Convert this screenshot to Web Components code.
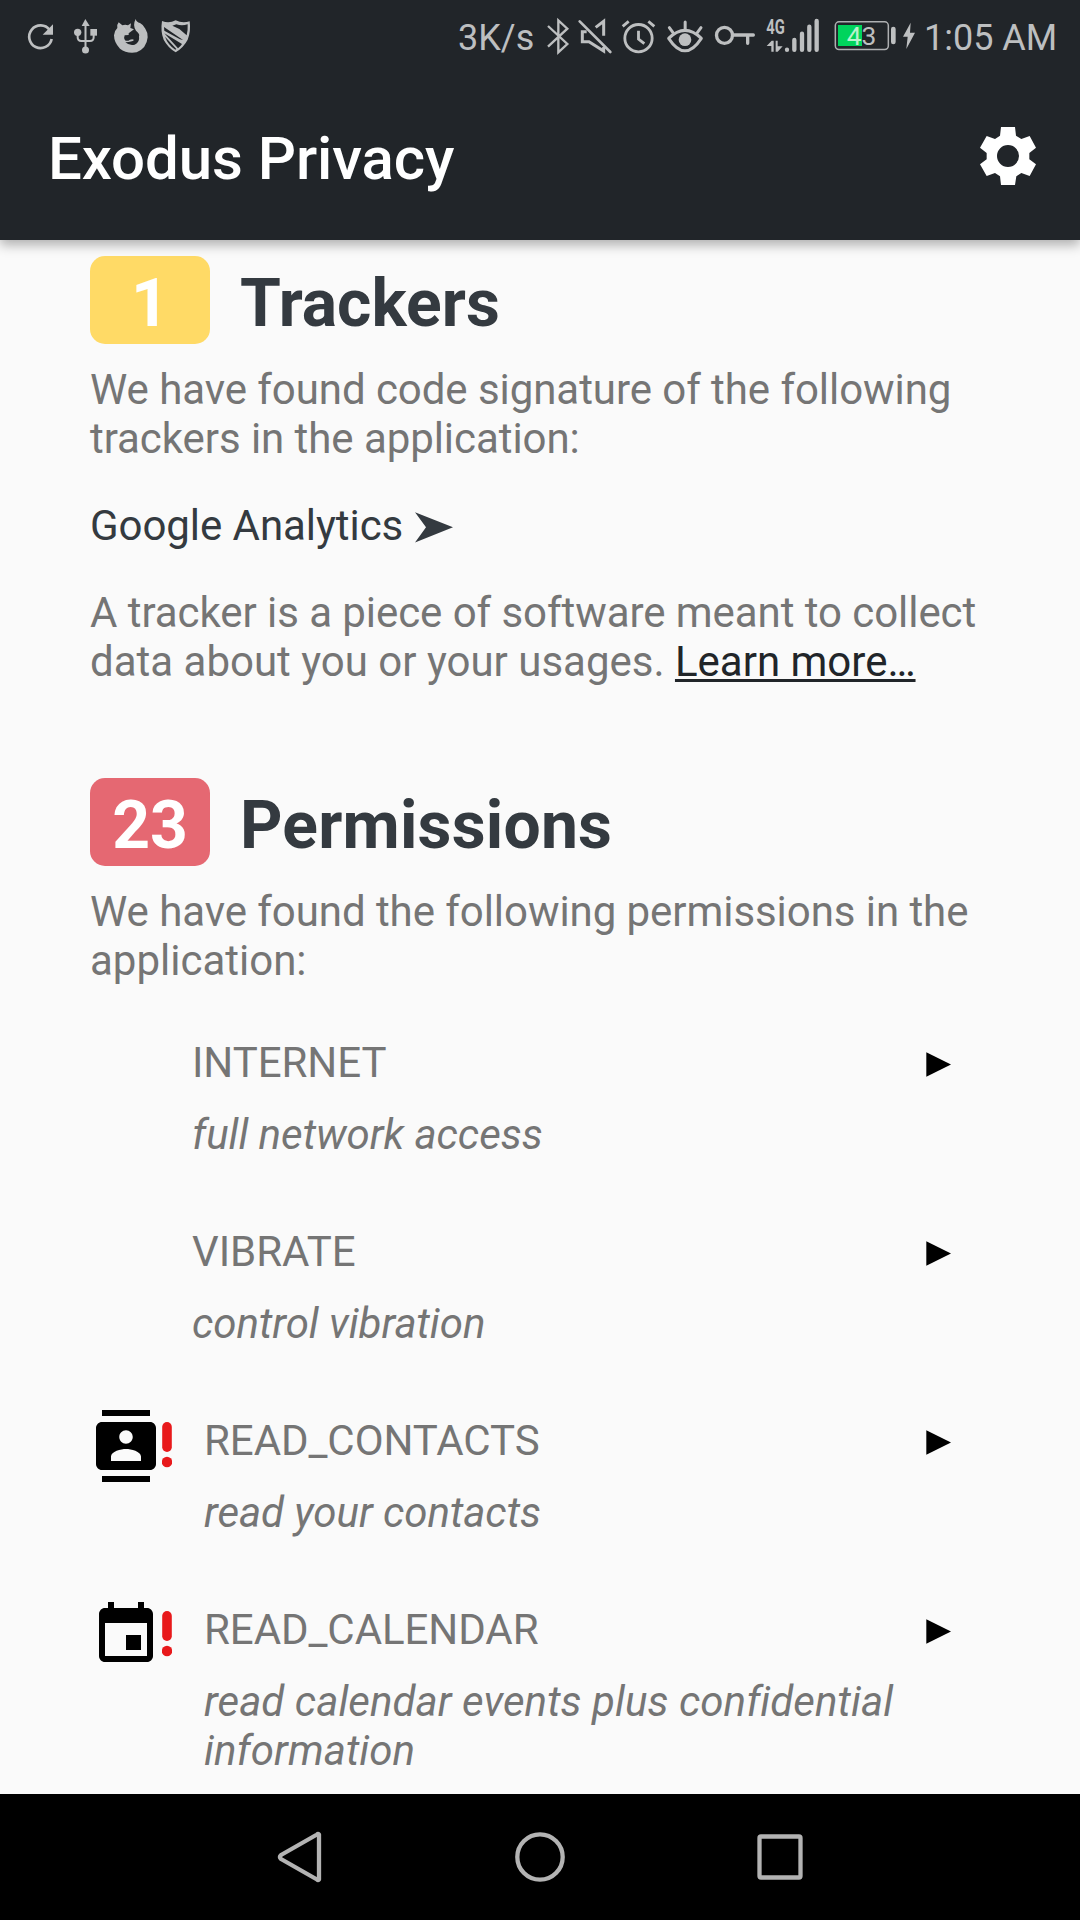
<!DOCTYPE html>
<html lang="en">
<head>
<meta charset="utf-8">
<title>Exodus Privacy</title>
<style>
html,body{margin:0;padding:0}
body{font-family:Roboto,"Noto Sans",sans-serif;background:#fafafa;color:#757575}
</style>
</head>
<body>
<exodus-app></exodus-app>
<script>
// Status glyphs: [x, width, origin, shape]; shapes are drawn on a grid of one third of a pixel.
const STATUS = {
  sync: [0, 64, 0, '<path d="M155 117A34 34 0 1 1 149 90" fill="none" stroke="#bdbfc0" stroke-width="8"/><path d="M159 73V104H128Z"/>'],
  usb: [64, 40, 0, '<path d="M256 57l13 21h-24Z"/><circle cx="256.500" cy="150" r="10.500"/><circle cx="233" cy="97" r="11"/><path d="M271 87h20v20h-20Z"/><path d="M256.500 74V150M233 104V112Q233 123 244 123H270Q281 123 281 112V104" fill="none" stroke="#bdbfc0" stroke-width="6"/>'],
  fox: [104, 50, 0, '<path d="M356 67L367 76Q376 73 384 76L393 70L391 84L402 88L390 97Q384 99 386 105L374 106Q370 115 375 121Q382 125 390 119Q398 116 402 120Q396 126 376 127Q388 138 404 134Q420 128 417 108Q421 104 408 92Q397 76 407 57Q409 66 420 69Q430 74 436 86Q444 98 443 112Q440 145 410 157Q380 162 360 146Q342 128 342 106Q343 92 352 84Q350 74 356 67Z"/>'],
  shield: [154, 46, 0, '<path d="M486 63Q507 71 527 61Q547 71 569 64Q573 95 563 119Q551 142 527 157Q503 142 491 119Q481 95 486 63Z"/><path fill="#212529" d="M529 73Q546 79 563 73Q564 92 560 106L538 87L517 77ZM492 81L549 120L540 118L493 92ZM493 100L546 132Q541 140 534 145L515 124ZM495 110L529 147L526 149Q504 135 495 110Z"/>'],
  bluetooth: [543, 33, 440, '<path d="M324 78L382 132L355 157V61L382 86L324 140" fill="none" stroke="#bdbfc0" stroke-width="7"/>'],
  mute: [576, 40, 440, '<g fill="none" stroke="#bdbfc0" stroke-width="9"><path d="M419 64L511 156" stroke-linecap="round" stroke-width="8"/><path d="M440 95H427V125H447L491 153V141M467 82L491 64V107"/></g>'],
  alarm: [616, 44, 440, '<g fill="none" stroke="#bdbfc0" stroke-width="8.500"><circle cx="595.500" cy="114.500" r="41"/><path d="M595.500 92V117L613 131M548 79L566 64M625 64L643 79"/></g>'],
  eye: [660, 48, 440, '<g fill="none" stroke="#bdbfc0" stroke-width="9" stroke-linecap="round"><path d="M686 115Q735 67 784 115Q735 190 686 115Z" stroke-linejoin="round"/><path d="M735.500 66V87M688 83L699 98M783 83L772 98"/></g><circle cx="735" cy="119" r="19"/>'],
  key: [708, 52, 440, '<g fill="none" stroke="#bdbfc0" stroke-width="10" stroke-linecap="round"><circle cx="853.500" cy="106" r="24"/><path d="M878 105H940M923 105V130"/></g>'],
  signal: [760, 70, 740, '<text transform="translate(79 101) scale(.74 1)" font-size="60" font-weight="700">4G</text><path d="M94 155V138H80L95 122H101V155ZM107 122H113V139H128L113 155H107Z"/><g stroke="#bdbfc0" stroke-width="13" stroke-linecap="round"><path d="M141 149V149.500M163 120V149.500M186 101V149.500M208 80V149.500M230 63V149.500"/></g>'],
  battery: [830, 94, 740, '<rect x="286" y="65.500" width="159" height="83" rx="11" fill="none" stroke="#aeb0b2" stroke-width="4.500"/><path fill="#00d45c" d="M294 75H366V138H294Z"/><rect x="453" y="80" width="14" height="53" rx="7"/><path d="M512 68L489 110H503L499 147L525 98H510Z"/><text x="320" y="135.500" font-size="79"><tspan fill="#b9f2cd">4</tspan><tspan>3</tspan></text>']
};

class StatusIcon extends HTMLElement {
  connectedCallback() {
    const [x, w, origin, shape] = STATUS[this.getAttribute('name')];
    this.attachShadow({mode: 'open'}).innerHTML = `
      <style>:host{display:block;flex:none;width:${w}px;height:72px}svg{display:block;font-family:Roboto,sans-serif}</style>
      <svg width="${w}" height="72" viewBox="${(x - origin) * 3} 0 ${w * 3} 216" fill="#bdbfc0">${shape}</svg>`;
  }
}
customElements.define('status-icon', StatusIcon);

class StatusBar extends HTMLElement {
  constructor() {
    super();
    const icons = names => names.map(n => `<status-icon name="${n}"></status-icon>`).join('');
    this.attachShadow({mode: 'open'}).innerHTML = `
      <style>
        :host{display:flex;height:72px;background:#212529;color:#bdbfc0;font-size:36px;line-height:76px}
        .left{display:flex;width:458px}
        .speed{width:85px}
        span{white-space:nowrap}
      </style>
      <div class="left">${icons(['sync', 'usb', 'fox', 'shield'])}</div>
      <span class="speed">3K/s</span>
      ${icons(['bluetooth', 'mute', 'alarm', 'eye', 'key', 'signal', 'battery'])}
      <span>1:05 AM</span>`;
  }
}
customElements.define('status-bar', StatusBar);

class AppBar extends HTMLElement {
  constructor() {
    super();
    this.attachShadow({mode: 'open'}).innerHTML = `
      <style>
        :host{display:flex;align-items:center;justify-content:space-between;box-sizing:border-box;height:168px;padding:0 44px 0 48px;background:#212529;color:#fff}
        h1{margin:0;padding-top:5px;font-size:60px;line-height:70px;font-weight:500;letter-spacing:-.08px}
        svg{display:block}
      </style>
      <h1><slot></slot></h1>
      <svg width="56" height="58" viewBox="240 111 168 174" fill="#fff" fill-rule="evenodd"><path d="M303 111H345L348 137L364 147L389 138L408 173L388 189V208L408 223L389 258L364 249L349 259L345 285H303L300 259L285 249L260 258L240 223L260 208V189L240 173L260 138L285 147L300 137ZM324 165A33 33 0 1 0 324 231A33 33 0 1 0 324 165Z"/></svg>`;
  }
}
customElements.define('app-bar', AppBar);

class SectionHead extends HTMLElement {
  constructor() {
    super();
    this.attachShadow({mode: 'open'}).innerHTML = `
      <style>
        :host{display:flex;gap:30px;height:88px;font-size:66px;line-height:95px;font-weight:700;color:#343a40}
        .badge{width:120px;border-radius:15px;background:var(--badge);color:#fff;text-align:center}
        h2{margin:0;font:inherit;letter-spacing:var(--track,0)}
      </style>
      <div class="badge"><slot name="count"></slot></div><h2><slot></slot></h2>`;
  }
}
customElements.define('section-head', SectionHead);

const GLYPHS = {
  contacts: '<path d="M20 0H4v2h16V0zM4 24h16v-2H4v2zM20 4H4c-1.100 0-2 .9-2 2v12c0 1.100.9 2 2 2h16c1.100 0 2-.9 2-2V6c0-1.100-.9-2-2-2zm-8 2.750c1.240 0 2.250 1.010 2.250 2.250s-1.010 2.250-2.250 2.250S9.750 10.240 9.750 9 10.760 6.750 12 6.750zM17 17H7v-1.500c0-1.670 3.330-2.500 5-2.500s5 .83 5 2.500V17z"/>',
  calendar: '<path d="M17 12h-5v5h5v-5zM16 1v2H8V1H6v2H5c-1.110 0-1.990.9-1.990 2L3 19c0 1.100.89 2 2 2h14c1.100 0 2-.9 2-2V5c0-1.100-.9-2-2-2h-1V1h-2zm3 18H5V8h14v11z"/>'
};

class PermissionRow extends HTMLElement {
  connectedCallback() {
    const icon = GLYPHS[this.getAttribute('icon')];
    this.attachShadow({mode: 'open'}).innerHTML = `
      <style>
        :host{display:flex;align-items:flex-start;min-height:189px;font-size:42px;line-height:49px}
        .lead{display:flex;flex:none;width:${icon ? 114 : 102}px}
        .lead svg,.go{display:block;flex:none}
        .text{flex:1;padding-top:6px}
        .name{margin-bottom:23px;letter-spacing:-.06px}
        .desc{font-style:italic;letter-spacing:var(--track,-.03px)}
        .go{margin:19.500px 39px 0 0}
      </style>
      <div class="lead">${icon ? `<svg width="72" height="72" viewBox="0 0 24 24">${icon}</svg><svg width="10" height="72" viewBox="0 0 10 72" fill="#e8191b"><rect x=".2" y="12" width="9.600" height="30" rx="4.800"/><circle cx="5" cy="52" r="5.200"/></svg>` : ''}</div>
      <div class="text"><div class="name"><slot></slot></div><div class="desc"><slot name="desc"></slot></div></div>
      <svg class="go" width="25" height="25" viewBox="0 0 25 25"><path d="M.3 .2L25 12.400L.3 24.700Z"/></svg>`;
  }
}
customElements.define('permission-row', PermissionRow);

class NavBar extends HTMLElement {
  constructor() {
    super();
    this.attachShadow({mode: 'open'}).innerHTML = `
      <style>
        :host{display:flex;justify-content:center;gap:180px;box-sizing:border-box;height:126px;padding-top:33px;background:#000}
        svg{display:block;fill:none;stroke:#b3b3b3;stroke-width:4.300;stroke-linejoin:round}
      </style>
      <svg width="60" height="60" viewBox="0 0 60 60"><path d="M49 7.500Q48 6.500 47 7.500L11 28Q9 30 11 32L47 52.500Q48 53.500 49 52.500Z"/></svg>
      <svg width="60" height="60" viewBox="0 0 60 60"><circle cx="30" cy="30" r="22.700"/></svg>
      <svg width="60" height="60" viewBox="0 0 60 60"><rect x="9.500" y="9.500" width="41" height="41" rx="1.500"/></svg>`;
  }
}
customElements.define('nav-bar', NavBar);

class ExodusApp extends HTMLElement {
  constructor() {
    super();
    this.attachShadow({mode: 'open'}).innerHTML = `
      <style>
        :host{display:flex;flex-direction:column;width:1080px;height:1920px;overflow:hidden;background:#fafafa}
        header{flex:none;z-index:1;box-shadow:0 5px 11px rgba(0,0,0,.3)}
        main{flex:1;min-height:0;overflow:hidden;box-sizing:border-box;padding:16px 90px 0;font-size:42px;line-height:49px;white-space:nowrap}
        p{margin:0}
        .tight{letter-spacing:-.06px}
        .intro{padding-top:21px}
        .tracker{display:flex;align-items:flex-start;gap:12px;margin:38px 0;color:#343a40}
        .tracker svg{margin-top:11px}
        .learn{color:#212529;text-decoration:underline;text-decoration-thickness:3px;text-underline-offset:3px;text-decoration-skip-ink:none}
        .perms{margin-top:92px;--track:.2px}
        .list{padding-top:47px}
        nav-bar{flex:none}
      </style>
      <header><status-bar></status-bar><app-bar>Exodus Privacy</app-bar></header>
      <main>
        <section-head style="--badge:#ffda66"><span slot="count">1</span>Trackers</section-head>
        <p class="intro tight">We have found code signature of the following<br>trackers in the application:</p>
        <div class="tracker"><span class="tight">Google Analytics</span><svg width="38" height="31" viewBox="0 0 38 31" fill="#343a40"><path d="M0 .3L38 15.300L0 30.500L11 15.300Z"/></svg></div>
        <p><span class="tight">A tracker is a piece of software meant to collect</span><br>data about you or your usages. <span class="learn">Learn more…</span></p>
        <section-head class="perms" style="--badge:#e56872"><span slot="count">23</span>Permissions</section-head>
        <p class="intro"><span class="tight">We have found the following permissions in the</span><br>application:</p>
        <div class="list">
          <permission-row>INTERNET<span slot="desc">full network access</span></permission-row>
          <permission-row>VIBRATE<span slot="desc">control vibration</span></permission-row>
          <permission-row icon="contacts">READ_CONTACTS<span slot="desc">read your contacts</span></permission-row>
          <permission-row icon="calendar" style="--track:.06px">READ_CALENDAR<span slot="desc">read calendar events plus confidential<br>information</span></permission-row>
        </div>
      </main>
      <nav-bar></nav-bar>`;
  }
}
customElements.define('exodus-app', ExodusApp);
</script>
</body>
</html>
